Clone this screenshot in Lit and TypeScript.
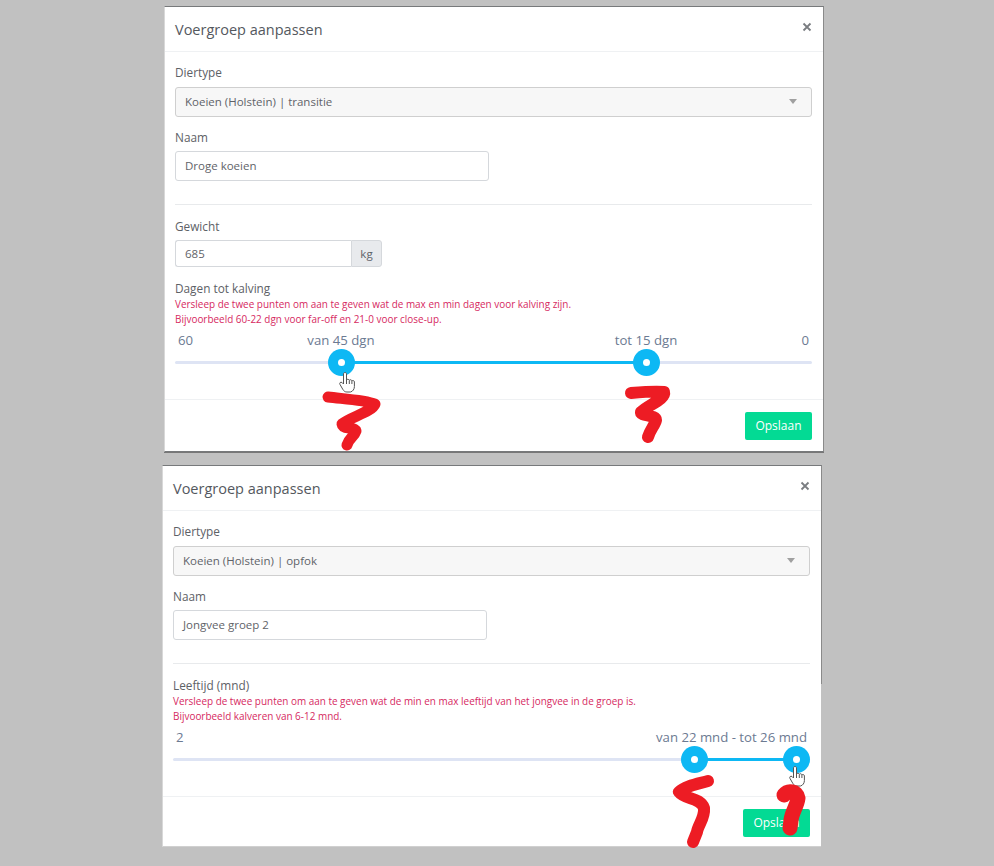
import { LitElement, html, css, svg } from 'lit';
import { customElement, property } from 'lit/decorators.js';

@customElement('range-slider')
export class RangeSlider extends LitElement {
  @property({ type: Number }) min = 0;
  @property({ type: Number }) max = 100;
  @property({ type: Number }) from = 0;
  @property({ type: Number }) to = 100;
  @property({ type: String }) fromLabel = '';
  @property({ type: String }) toLabel = '';
  @property({ type: String }) joinedLabel = '';
  @property({ type: String }) minLabel = '';
  @property({ type: String }) maxLabel = '';

  static styles = css`
    :host {
      display: block;
      position: relative;
      height: 48px;
      color: #6c7a92;
      font-size: 13.2px;
      line-height: 20px;
    }
    .track {
      position: absolute;
      left: 0;
      right: 0;
      top: 32px;
      height: 3px;
      border-radius: 2px;
      background: #dee4f4;
    }
    .bar {
      position: absolute;
      top: 32px;
      height: 3px;
      background: #0db8f4;
    }
    .thumb {
      position: absolute;
      top: 20px;
      width: 27px;
      height: 27px;
      margin-left: -13.5px;
      border-radius: 50%;
      background: #0db8f4;
    }
    .thumb::after {
      content: '';
      position: absolute;
      left: 10px;
      top: 10px;
      width: 7px;
      height: 7px;
      border-radius: 50%;
      background: #fff;
    }
    .label {
      position: absolute;
      top: 1px;
      white-space: nowrap;
    }
    .centered {
      transform: translateX(-50%);
    }
    .lo {
      left: 3px;
    }
    .hi {
      right: 3px;
    }
  `;

  private pos(v: number) {
    const t = (v - this.min) / (this.max - this.min);
    return `calc(13.5px + (100% - 27px) * ${t})`;
  }

  render() {
    const a = this.pos(this.from);
    const b = this.pos(this.to);
    return html`
      <div class="track"></div>
      <div class="bar" style="left:${a};right:calc(100% - ${b})"></div>
      <span class="label lo">${this.minLabel}</span>
      ${this.maxLabel ? html`<span class="label hi">${this.maxLabel}</span>` : ''}
      ${this.fromLabel ? html`<span class="label centered" style="left:${a}">${this.fromLabel}</span>` : ''}
      ${this.toLabel ? html`<span class="label centered" style="left:${b}">${this.toLabel}</span>` : ''}
      ${this.joinedLabel ? html`<span class="label hi">${this.joinedLabel}</span>` : ''}
      <div class="thumb" style="left:${a}"></div>
      <div class="thumb" style="left:${b}"></div>
    `;
  }
}

const hand = (x: number, y: number) => svg`
  <g transform="translate(${x} ${y})">
    <path d="M4.5 2c0-2 3-2 3 0v6c.5-1 2.4-1 2.8.3.6-.9 2.3-.7 2.6.5.7-.6 2.4-.3 2.5 1v4.7c0 2.5-1.5 5-4 5.5H7.9c-2 0-3-1-4-2.5L1 12.5c-1-1.4.7-3 2-2l1.5 1.5z" fill="#fff" stroke="#555" stroke-width="1"/>
    <path d="M7.5 8v4M10.3 8.5V12M12.9 9v3" fill="none" stroke="#555" stroke-width="1"/>
  </g>
`;

@customElement('app-root')
export class AppRoot extends LitElement {
  static styles = css`
    :host {
      display: block;
      position: relative;
      width: 994px;
      height: 866px;
      overflow: hidden;
      background: #c1c1c1;
      font-family: 'Open Sans', sans-serif;
      font-size: 11.8px;
      color: #5d6166;
    }
    .page {
      display: flex;
      flex-direction: column;
      gap: 13px;
      padding-top: 6px;
    }
    .modal {
      background: #fff;
      box-sizing: border-box;
      border-top: 1px solid #77797b;
      border-right: 1px solid #8a8a8a;
      border-left: 1px solid #d8d8d8;
      box-shadow: 0 1px 0 #777;
    }
    .first {
      width: 660px;
      margin-left: 164px;
      height: 446px;
      border-bottom: 1px solid #77797b;
    }
    .second {
      width: 660px;
      margin-left: 162px;
      height: 382px;
      box-shadow: none;
      border-bottom: 1px solid #d0d0d0;
    }
    header {
      display: flex;
      justify-content: space-between;
      height: 45px;
      box-sizing: border-box;
      padding: 13px 11px 0 10px;
      border-bottom: 1px solid #eff1f3;
      font-size: 14.5px;
      line-height: 20px;
      color: #54585e;
    }
    .close {
      display: block;
      margin-top: 2px;
    }
    .body {
      padding: 11px 11px 0 10px;
    }
    label {
      display: block;
      line-height: 18px;
    }
    .field {
      margin-bottom: 11px;
    }
    .select,
    .input,
    .addon {
      box-sizing: border-box;
      display: flex;
      align-items: center;
      height: 30px;
      padding: 0 9px 1px;
      border: 1px solid #d5d8dc;
      border-radius: 3px;
      font-size: 11.5px;
      color: #5f6369;
    }
    .select {
      justify-content: space-between;
      margin-top: 6px;
      background: #f7f7f7;
      border-color: #cfcfcf;
    }
    .caret {
      width: 0;
      height: 0;
      margin-right: 5px;
      border-left: 4px solid transparent;
      border-right: 4px solid transparent;
      border-top: 5px solid #a0a0a0;
    }
    .input {
      width: 314px;
      margin-top: 5px;
      background: #fff;
    }
    hr {
      height: 1px;
      border: 0;
      margin: 23px 0 12px;
      background: #e8eaec;
    }
    .group {
      display: flex;
      margin-top: 5px;
      margin-bottom: 12px;
    }
    .group .input {
      width: 176px;
      height: 27px;
      margin: 0;
      border-radius: 3px 0 0 3px;
      border-right: 0;
    }
    .group .addon {
      width: 31px;
      height: 27px;
      margin: 0;
      justify-content: center;
      padding: 0;
      background: #e8eaed;
      border-radius: 0 3px 3px 0;
    }
    .hint {
      font-size: 9.95px;
      line-height: 15px;
      color: #d6295f;
    }
    .hint div {
      white-space: nowrap;
    }
    range-slider {
      margin-top: 2px;
    }
    footer {
      display: flex;
      justify-content: flex-end;
      box-sizing: border-box;
      margin-top: 22px;
      padding: 12px 11px 0 0;
      border-top: 1px solid #eff1f3;
    }
    .save {
      height: 28px;
      width: 67px;
      padding: 0;
      border: 0;
      border-radius: 2px;
      background: #03da94;
      color: #fff;
      font: 12px/28px 'Open Sans', sans-serif;
    }
    .patch {
      position: absolute;
      left: 821px;
      top: 684px;
      width: 3px;
      height: 164px;
      background: #c1c1c1;
    }
    .scribbles {
      position: absolute;
      left: 0;
      top: 0;
      pointer-events: none;
    }
    .scribbles .red {
      fill: none;
      stroke: #ed1c24;
      stroke-linecap: round;
      stroke-linejoin: round;
    }
  `;

  private closeIcon() {
    return html`<svg class="close" width="10" height="10" viewBox="0 0 10 10">
      <path d="M1.5 1.5l7 7M8.5 1.5l-7 7" stroke="#7a7d81" stroke-width="1.8" fill="none" />
    </svg>`;
  }

  private diertype(value: string) {
    return html`
      <div class="field">
        <label>Diertype</label>
        <div class="select"><span>${value}</span><span class="caret"></span></div>
      </div>
    `;
  }

  private naam(value: string) {
    return html`
      <div class="field">
        <label>Naam</label>
        <div class="input">${value}</div>
      </div>
      <hr />
    `;
  }

  render() {
    return html`
      <div class="page">
        <section class="modal first">
          <header>Voergroep aanpassen ${this.closeIcon()}</header>
          <div class="body">
            ${this.diertype('Koeien (Holstein) | transitie')}
            ${this.naam('Droge koeien')}
            <label>Gewicht</label>
            <div class="group">
              <div class="input">685</div>
              <div class="addon">kg</div>
            </div>
            <label>Dagen tot kalving</label>
            <div class="hint">
              <div>Versleep de twee punten om aan te geven wat de max en min dagen voor kalving zijn.</div>
              <div>Bijvoorbeeld 60-22 dgn voor far-off en 21-0 voor close-up.</div>
            </div>
            <range-slider
              .min=${0}
              .max=${60}
              .from=${15}
              .to=${45}
              minLabel="60"
              maxLabel="0"
              fromLabel="van 45 dgn"
              toLabel="tot 15 dgn"
            ></range-slider>
          </div>
          <footer><button class="save">Opslaan</button></footer>
        </section>
        <section class="modal second">
          <header>Voergroep aanpassen ${this.closeIcon()}</header>
          <div class="body">
            ${this.diertype('Koeien (Holstein) | opfok')}
            ${this.naam('Jongvee groep 2')}
            <label>Leeftijd (mnd)</label>
            <div class="hint">
              <div>Versleep de twee punten om aan te geven wat de min en max leeftijd van het jongvee in de groep is.</div>
              <div>Bijvoorbeeld kalveren van 6-12 mnd.</div>
            </div>
            <range-slider
              .min=${2}
              .max=${26}
              .from=${22}
              .to=${26}
              minLabel="2"
              joinedLabel="van 22 mnd - tot 26 mnd"
            ></range-slider>
          </div>
          <footer><button class="save">Opslaan</button></footer>
        </section>
      </div>
      <div class="patch"></div>
      <svg class="scribbles" width="994" height="866" viewBox="0 0 994 866">
        ${hand(339, 372)} ${hand(789, 766)}
        <path class="red" stroke-width="11" d="M328 397C345 399 365 400 375 404C372 412 350 417 342 424C343 431 354 425 356 431C354 437 349 438 347 445" />
        <path class="red" stroke-width="12" d="M631 393c12-1 26-2 33-1 2 7-16 13-23 20-1 4 15 3 15 8-1 5-6 10-8 17" />
        <path class="red" stroke-width="12" d="M708 781C697 784 685 786 679 792C685 800 700 797 704 808C705 818 698 825 697 832L693 842" />
        <path class="red" stroke-width="15" d="M784 795C788 790 797 791 798 798C797 806 792 812 791 820L790 828" />
      </svg>
    `;
  }
}

declare global {
  interface HTMLElementTagNameMap {
    'app-root': AppRoot;
    'range-slider': RangeSlider;
  }
}
